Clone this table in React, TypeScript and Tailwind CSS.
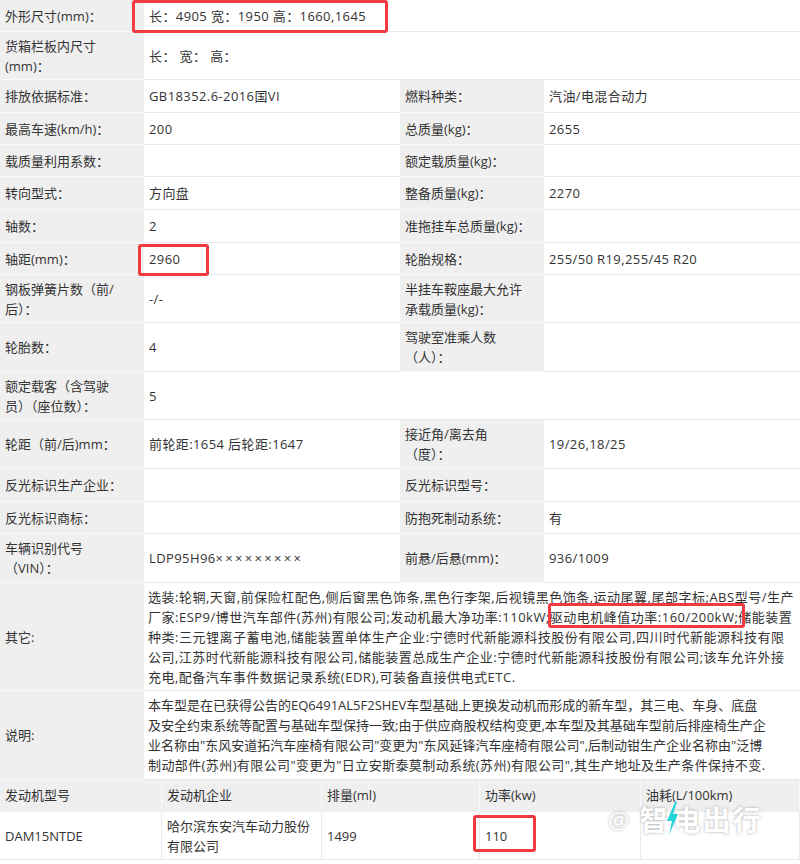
import React from "react";

type R = {
  l1: React.ReactNode;
  v1?: React.ReactNode;
  l2?: React.ReactNode;
  v2?: React.ReactNode;
  h: 32 | 33 | 48 | 49;
  half?: boolean;
};

const H: Record<number, string> = {
  32: "h-[32px]",
  33: "h-[33px]",
  48: "h-[48px]",
  49: "h-[49px]",
};

const rows: R[] = [
  { l1: "外形尺寸(mm)：", v1: "长：4905 宽：1950 高：1660,1645", h: 32, half: true },
  { l1: <>货箱栏板内尺寸<br />(mm)：</>, v1: "长： 宽： 高：", h: 48, half: true },
  { l1: "排放依据标准：", v1: "GB18352.6-2016国VI", l2: "燃料种类：", v2: "汽油/电混合动力", h: 33 },
  { l1: "最高车速(km/h)：", v1: "200", l2: "总质量(kg)：", v2: "2655", h: 32 },
  { l1: "载质量利用系数：", v1: "", l2: "额定载质量(kg)：", v2: "", h: 32 },
  { l1: "转向型式：", v1: "方向盘", l2: "整备质量(kg)：", v2: "2270", h: 33 },
  { l1: "轴数：", v1: "2", l2: "准拖挂车总质量(kg)：", v2: "", h: 33 },
  { l1: "轴距(mm)：", v1: "2960", l2: "轮胎规格：", v2: "255/50 R19,255/45 R20", h: 32 },
  { l1: <>钢板弹簧片数（前/<br />后）：</>, v1: "-/-", l2: <>半挂车鞍座最大允许<br />承载质量(kg)：</>, v2: "", h: 48 },
  { l1: "轮胎数：", v1: "4", l2: <>驾驶室准乘人数<br />（人）：</>, v2: "", h: 49 },
  { l1: <>额定载客（含驾驶<br />员）（座位数）：</>, v1: "5", h: 48, half: true },
  { l1: "轮距（前/后)mm：", v1: "前轮距:1654 后轮距:1647", l2: <>接近角/离去角<br />（度）：</>, v2: "19/26,18/25", h: 49 },
  { l1: "反光标识生产企业：", v1: "", l2: "反光标识型号：", v2: "", h: 33 },
  { l1: "反光标识商标：", v1: "", l2: "防抱死制动系统：", v2: "有", h: 32 },
  {
    l1: <>车辆识别代号<br />（VIN）：</>,
    v1: <>LDP95H96<span className="tracking-[2.3px]">×××××××××</span></>,
    l2: "前悬/后悬(mm)：",
    v2: "936/1009",
    h: 49,
  },
];

const otherLines = [
  "选装:轮辋,天窗,前保险杠配色,侧后窗黑色饰条,黑色行李架,后视镜黑色饰条,运动尾翼,尾部字标;ABS型号/生产",
  "厂家:ESP9/博世汽车部件(苏州)有限公司;发动机最大净功率:110kW;驱动电机峰值功率:160/200kW;储能装置",
  "种类:三元锂离子蓄电池,储能装置单体生产企业:宁德时代新能源科技股份有限公司,四川时代新能源科技有限",
  "公司,江苏时代新能源科技有限公司,储能装置总成生产企业:宁德时代新能源科技股份有限公司;该车允许外接",
  "充电,配备汽车事件数据记录系统(EDR),可装备直接供电式ETC.",
];

const noteLines = [
  "本车型是在已获得公告的EQ6491AL5F2SHEV车型基础上更换发动机而形成的新车型，其三电、车身、底盘",
  "及安全约束系统等配置与基础车型保持一致;由于供应商股权结构变更,本车型及其基础车型前后排座椅生产企",
  "业名称由\"东风安道拓汽车座椅有限公司\"变更为\"东风延锋汽车座椅有限公司\",后制动钳生产企业名称由\"泛博",
];
const noteLast = "制动部件(苏州)有限公司\"变更为\"日立安斯泰莫制动系统(苏州)有限公司\",其生产地址及生产条件保持不变.";

function Label({ children }: { children?: React.ReactNode }) {
  return (
    <div className="flex items-center bg-[#efefef] px-[5px] leading-[20px] border-b border-[#f9f9f9] overflow-hidden whitespace-nowrap">
      <div>{children}</div>
    </div>
  );
}

function Value({ children }: { children?: React.ReactNode }) {
  return (
    <div className="flex items-center bg-white px-[5px] leading-[20px] tracking-[0.4px] border-b border-[#e9e9e9] whitespace-nowrap">
      <div>{children}</div>
    </div>
  );
}

function Bolt() {
  return (
    <svg className="absolute left-[-7px] top-[-3px] w-[13px] h-[33px]" viewBox="0 0 13 33">
      <polygon points="9,0 1,19 6,19 3,33 12,12 7,12 11,0" fill="#25d3d8" />
    </svg>
  );
}

export default function App() {
  return (
    <div className="relative w-[800px] h-[864px] bg-white overflow-hidden text-[13px] text-[#333] font-['Open_Sans','Noto_Sans_CJK_SC',sans-serif]">
      {rows.map((r, i) => (
        <div key={i} className={`grid grid-cols-[144px_256px_144px_256px] ${H[r.h]}`}>
          <Label>{r.l1}</Label>
          <Value>{r.v1}</Value>
          {r.half ? (
            <div className="col-span-2 border-b border-[#e9e9e9]" />
          ) : (
            <>
              <Label>{r.l2}</Label>
              <Value>{r.v2}</Value>
            </>
          )}
        </div>
      ))}

      <div className="grid grid-cols-[144px_656px] h-[108px]">
        <Label>其它:</Label>
        <div className="flex flex-col justify-center bg-white pl-[4px] leading-[20px] tracking-[0.5px] border-b border-[#e9e9e9] whitespace-nowrap">
          {otherLines.map((t, i) => (
            <div key={i}>{t}</div>
          ))}
        </div>
      </div>

      <div className="grid grid-cols-[144px_656px] h-[89px]">
        <Label>说明:</Label>
        <div className="flex flex-col justify-center bg-white pl-[4px] leading-[20px] border-b border-[#e9e9e9] whitespace-nowrap">
          {noteLines.map((t, i) => (
            <div key={i}>{t}</div>
          ))}
          <div className="tracking-[0.4px]">{noteLast}</div>
        </div>
      </div>

      <div className="grid grid-cols-[162px_160px_158px_161px_159px] h-[32px] bg-[#efefef]">
        {["发动机型号", "发动机企业", "排量(ml)", "功率(kw)", "油耗(L/100km)"].map((t, i) => (
          <div key={i} className="flex items-center px-[5px] border-r border-[#f9f9f9] whitespace-nowrap">
            {t}
          </div>
        ))}
      </div>
      <div className="grid grid-cols-[162px_160px_158px_161px_159px] h-[48px] border-b border-[#e9e9e9]">
        {[
          "DAM15NTDE",
          <>哈尔滨东安汽车动力股份<br />有限公司</>,
          "1499",
          "110",
          "",
        ].map((t, i) => (
          <div key={i} className="flex items-center px-[5px] leading-[20px] border-r border-[#e9e9e9] whitespace-nowrap">
            <div>{t}</div>
          </div>
        ))}
      </div>

      {/* red highlight boxes */}
      <div className="absolute left-[132px] top-[0px] w-[256px] h-[33px] border-[3px] border-[#ef3b3f] rounded-[3px]" />
      <div className="absolute left-[138px] top-[244px] w-[71px] h-[32px] border-[3px] border-[#ef3b3f] rounded-[3px]" />
      <div className="absolute left-[548px] top-[603px] w-[197px] h-[25px] border-[3px] border-[#ef3b3f] rounded-[3px]" />
      <div className="absolute left-[473px] top-[815px] w-[63px] h-[37px] border-[3px] border-[#ef3b3f] rounded-[3px]" />

      {/* watermark */}
      <div className="absolute left-[608px] top-[805px] flex items-center gap-[2px] text-white font-bold leading-[30px] [text-shadow:0_0_3px_rgba(0,0,0,0.35)]">
        <span className="text-[24px] font-normal mr-[8px]">@</span>
        <span className="text-[28px]">智</span>
        <span className="relative text-[28px] ml-[3px]">
          电
          <Bolt />
        </span>
        <span className="text-[28px]">出</span>
        <span className="text-[28px]">行</span>
      </div>
    </div>
  );
}
